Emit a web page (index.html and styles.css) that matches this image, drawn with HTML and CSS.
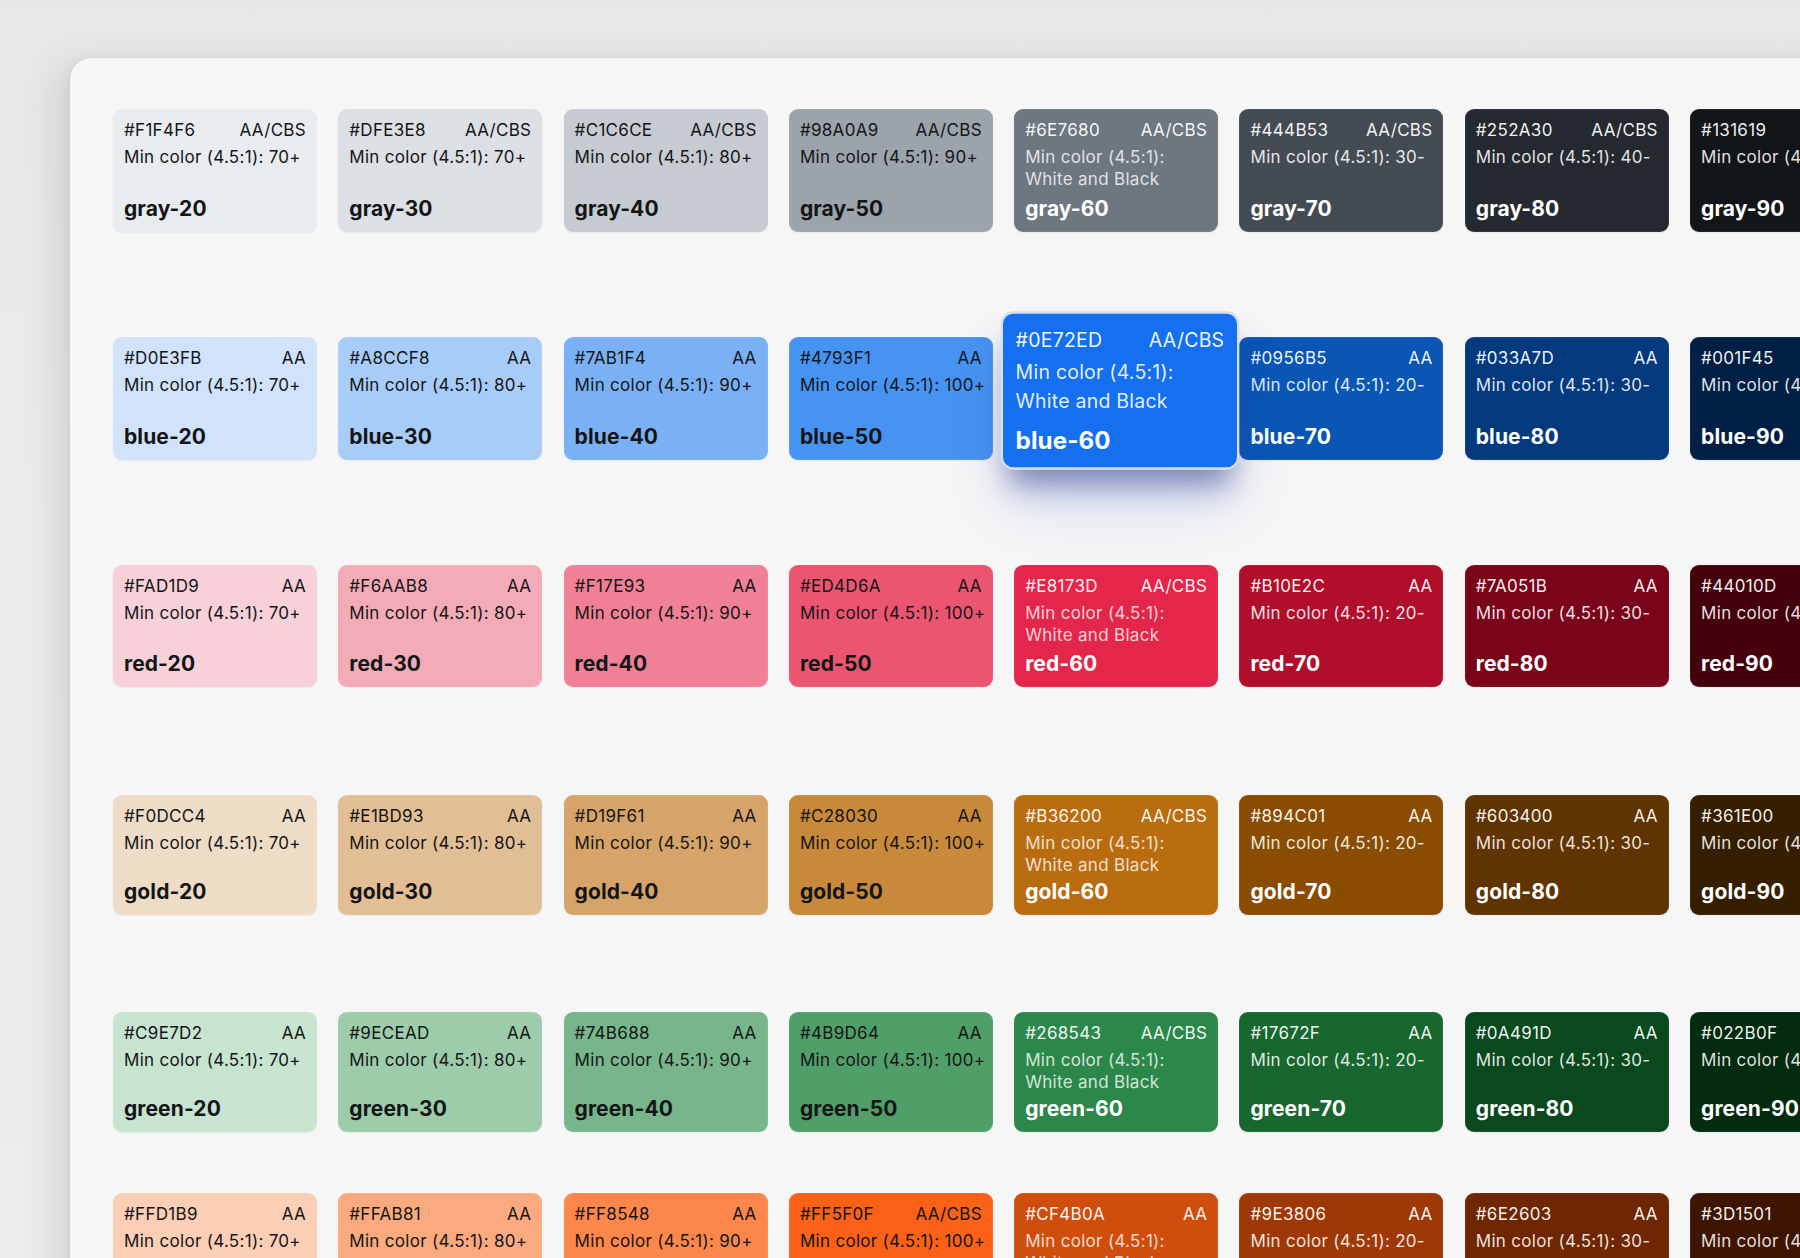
FILE: index.html
```html
<!DOCTYPE html>
<html lang="en">
<head>
<meta charset="utf-8">
<title>Color tokens</title>
<link rel="stylesheet" href="styles.css">
</head>
<body>
<main class="stage">
  <section class="panel">
    <div class="row row-gray">
      <div class="card light" style="--c:#E9ECEF"><div class="top"><span>#F1F4F6</span><span>AA/CBS</span></div><div class="min">Min color (4.5:1): 70+</div><div class="name">gray-20</div></div>
      <div class="card light" style="--c:#DCDFE4"><div class="top"><span>#DFE3E8</span><span>AA/CBS</span></div><div class="min">Min color (4.5:1): 70+</div><div class="name">gray-30</div></div>
      <div class="card light" style="--c:#C6CAD1"><div class="top"><span>#C1C6CE</span><span>AA/CBS</span></div><div class="min">Min color (4.5:1): 80+</div><div class="name">gray-40</div></div>
      <div class="card light" style="--c:#9CA3AB"><div class="top"><span>#98A0A9</span><span>AA/CBS</span></div><div class="min">Min color (4.5:1): 90+</div><div class="name">gray-50</div></div>
      <div class="card dark mid" style="--c:#6E7680"><div class="top"><span>#6E7680</span><span>AA/CBS</span></div><div class="min">Min color (4.5:1):<br>White and Black</div><div class="name">gray-60</div></div>
      <div class="card dark" style="--c:#444B53"><div class="top"><span>#444B53</span><span>AA/CBS</span></div><div class="min">Min color (4.5:1): 30-</div><div class="name">gray-70</div></div>
      <div class="card dark" style="--c:#252A30"><div class="top"><span>#252A30</span><span>AA/CBS</span></div><div class="min">Min color (4.5:1): 40-</div><div class="name">gray-80</div></div>
      <div class="card dark" style="--c:#131619"><div class="top"><span>#131619</span><span>AA/CBS</span></div><div class="min">Min color (4.5:1): 50-</div><div class="name">gray-90</div></div>
    </div>

    <div class="row row-blue">
      <div class="card light" style="--c:#D0E3FB"><div class="top"><span>#D0E3FB</span><span>AA</span></div><div class="min">Min color (4.5:1): 70+</div><div class="name">blue-20</div></div>
      <div class="card light" style="--c:#A8CCF8"><div class="top"><span>#A8CCF8</span><span>AA</span></div><div class="min">Min color (4.5:1): 80+</div><div class="name">blue-30</div></div>
      <div class="card light" style="--c:#7AB1F4"><div class="top"><span>#7AB1F4</span><span>AA</span></div><div class="min">Min color (4.5:1): 90+</div><div class="name">blue-40</div></div>
      <div class="card light" style="--c:#4793F1"><div class="top"><span>#4793F1</span><span>AA</span></div><div class="min">Min color (4.5:1): 100+</div><div class="name">blue-50</div></div>
      <div class="card dark focus" style="--c:#1570F0"><div class="top"><span>#0E72ED</span><span>AA/CBS</span></div><div class="min">Min color (4.5:1):<br>White and Black</div><div class="name">blue-60</div></div>
      <div class="card dark" style="--c:#0956B5"><div class="top"><span>#0956B5</span><span>AA</span></div><div class="min">Min color (4.5:1): 20-</div><div class="name">blue-70</div></div>
      <div class="card dark" style="--c:#033A7D"><div class="top"><span>#033A7D</span><span>AA</span></div><div class="min">Min color (4.5:1): 30-</div><div class="name">blue-80</div></div>
      <div class="card dark" style="--c:#001F45"><div class="top"><span>#001F45</span><span>AA</span></div><div class="min">Min color (4.5:1): 40-</div><div class="name">blue-90</div></div>
    </div>

    <div class="row row-red">
      <div class="card light" style="--c:#F7D0D8"><div class="top"><span>#FAD1D9</span><span>AA</span></div><div class="min">Min color (4.5:1): 70+</div><div class="name">red-20</div></div>
      <div class="card light" style="--c:#F4ABB8"><div class="top"><span>#F6AAB8</span><span>AA</span></div><div class="min">Min color (4.5:1): 80+</div><div class="name">red-30</div></div>
      <div class="card light" style="--c:#F08095"><div class="top"><span>#F17E93</span><span>AA</span></div><div class="min">Min color (4.5:1): 90+</div><div class="name">red-40</div></div>
      <div class="card light" style="--c:#EC5570"><div class="top"><span>#ED4D6A</span><span>AA</span></div><div class="min">Min color (4.5:1): 100+</div><div class="name">red-50</div></div>
      <div class="card dark mid" style="--c:#E3264A"><div class="top"><span>#E8173D</span><span>AA/CBS</span></div><div class="min">Min color (4.5:1):<br>White and Black</div><div class="name">red-60</div></div>
      <div class="card dark" style="--c:#B10E2C"><div class="top"><span>#B10E2C</span><span>AA</span></div><div class="min">Min color (4.5:1): 20-</div><div class="name">red-70</div></div>
      <div class="card dark" style="--c:#7A051B"><div class="top"><span>#7A051B</span><span>AA</span></div><div class="min">Min color (4.5:1): 30-</div><div class="name">red-80</div></div>
      <div class="card dark" style="--c:#44010D"><div class="top"><span>#44010D</span><span>AA</span></div><div class="min">Min color (4.5:1): 40-</div><div class="name">red-90</div></div>
    </div>

    <div class="row row-gold">
      <div class="card light" style="--c:#EEDCC6"><div class="top"><span>#F0DCC4</span><span>AA</span></div><div class="min">Min color (4.5:1): 70+</div><div class="name">gold-20</div></div>
      <div class="card light" style="--c:#E2BE95"><div class="top"><span>#E1BD93</span><span>AA</span></div><div class="min">Min color (4.5:1): 80+</div><div class="name">gold-30</div></div>
      <div class="card light" style="--c:#D6A468"><div class="top"><span>#D19F61</span><span>AA</span></div><div class="min">Min color (4.5:1): 90+</div><div class="name">gold-40</div></div>
      <div class="card light" style="--c:#C8893A"><div class="top"><span>#C28030</span><span>AA</span></div><div class="min">Min color (4.5:1): 100+</div><div class="name">gold-50</div></div>
      <div class="card dark mid" style="--c:#BA6D10"><div class="top"><span>#B36200</span><span>AA/CBS</span></div><div class="min">Min color (4.5:1):<br>White and Black</div><div class="name">gold-60</div></div>
      <div class="card dark" style="--c:#894C01"><div class="top"><span>#894C01</span><span>AA</span></div><div class="min">Min color (4.5:1): 20-</div><div class="name">gold-70</div></div>
      <div class="card dark" style="--c:#603400"><div class="top"><span>#603400</span><span>AA</span></div><div class="min">Min color (4.5:1): 30-</div><div class="name">gold-80</div></div>
      <div class="card dark" style="--c:#361E00"><div class="top"><span>#361E00</span><span>AA</span></div><div class="min">Min color (4.5:1): 40-</div><div class="name">gold-90</div></div>
    </div>

    <div class="row row-green">
      <div class="card light" style="--c:#C6E4CF"><div class="top"><span>#C9E7D2</span><span>AA</span></div><div class="min">Min color (4.5:1): 70+</div><div class="name">green-20</div></div>
      <div class="card light" style="--c:#9DCCAB"><div class="top"><span>#9ECEAD</span><span>AA</span></div><div class="min">Min color (4.5:1): 80+</div><div class="name">green-30</div></div>
      <div class="card light" style="--c:#77B68A"><div class="top"><span>#74B688</span><span>AA</span></div><div class="min">Min color (4.5:1): 90+</div><div class="name">green-40</div></div>
      <div class="card light" style="--c:#509F68"><div class="top"><span>#4B9D64</span><span>AA</span></div><div class="min">Min color (4.5:1): 100+</div><div class="name">green-50</div></div>
      <div class="card dark mid" style="--c:#2C874A"><div class="top"><span>#268543</span><span>AA/CBS</span></div><div class="min">Min color (4.5:1):<br>White and Black</div><div class="name">green-60</div></div>
      <div class="card dark" style="--c:#17672F"><div class="top"><span>#17672F</span><span>AA</span></div><div class="min">Min color (4.5:1): 20-</div><div class="name">green-70</div></div>
      <div class="card dark" style="--c:#0A491D"><div class="top"><span>#0A491D</span><span>AA</span></div><div class="min">Min color (4.5:1): 30-</div><div class="name">green-80</div></div>
      <div class="card dark" style="--c:#022B0F"><div class="top"><span>#022B0F</span><span>AA</span></div><div class="min">Min color (4.5:1): 40-</div><div class="name">green-90</div></div>
    </div>

    <div class="row row-orange">
      <div class="card light" style="--c:#FBCFB6"><div class="top"><span>#FFD1B9</span><span>AA</span></div><div class="min">Min color (4.5:1): 70+</div><div class="name">orange-20</div></div>
      <div class="card light" style="--c:#FBAA80"><div class="top"><span>#FFAB81</span><span>AA</span></div><div class="min">Min color (4.5:1): 80+</div><div class="name">orange-30</div></div>
      <div class="card light" style="--c:#FC874C"><div class="top"><span>#FF8548</span><span>AA</span></div><div class="min">Min color (4.5:1): 90+</div><div class="name">orange-40</div></div>
      <div class="card light" style="--c:#FB6217"><div class="top"><span>#FF5F0F</span><span>AA/CBS</span></div><div class="min">Min color (4.5:1): 100+</div><div class="name">orange-50</div></div>
      <div class="card dark mid" style="--c:#CF4E0E"><div class="top"><span>#CF4B0A</span><span>AA</span></div><div class="min">Min color (4.5:1):<br>White and Black</div><div class="name">orange-60</div></div>
      <div class="card dark" style="--c:#9E3806"><div class="top"><span>#9E3806</span><span>AA</span></div><div class="min">Min color (4.5:1): 20-</div><div class="name">orange-70</div></div>
      <div class="card dark" style="--c:#6E2603"><div class="top"><span>#6E2603</span><span>AA</span></div><div class="min">Min color (4.5:1): 30-</div><div class="name">orange-80</div></div>
      <div class="card dark" style="--c:#3D1501"><div class="top"><span>#3D1501</span><span>AA</span></div><div class="min">Min color (4.5:1): 40-</div><div class="name">orange-90</div></div>
    </div>
  </section>
</main>
</body>
</html>
```

FILE: styles.css
```css
* { box-sizing: border-box; }

html, body {
  margin: 0;
  padding: 0;
  height: 100%;
}

body {
  width: 1800px;
  height: 1258px;
  overflow: hidden;
  background: linear-gradient(180deg, #e7e7e9 0%, #ebebed 40%, #ececee 100%);
  font-family: Inter, "Noto Sans", "Liberation Sans", sans-serif;
  -webkit-font-smoothing: antialiased;
}

.stage {
  padding: 58px 0 0 70px;
}

.panel {
  width: 1900px;
  height: 1400px;
  background: #f6f6f7;
  border-radius: 22px 0 0 0;
  padding: 51px 0 0 43px;
  box-shadow: -16px 6px 36px rgba(0, 0, 0, 0.09), -3px 0 8px rgba(0, 0, 0, 0.04);
}

.row {
  display: grid;
  grid-template-columns: repeat(8, 204px);
  column-gap: 21.3px;
}

.row-gray  { height: 123px; }
.row-blue  { height: 123px; margin-top: 105px; }
.row-red   { height: 122px; margin-top: 105px; }
.row-gold  { height: 120px; margin-top: 108px; }
.row-green { height: 120px; margin-top: 97px; }
.row-orange{ height: 120px; margin-top: 61px; }

.card {
  background: var(--c);
  border-radius: 9px;
  padding: 8px 11px 10px 11px;
  display: flex;
  flex-direction: column;
  font-size: 17px;
  line-height: 26.5px;
  letter-spacing: 0.3px;
  box-shadow: 0 1px 2px rgba(0, 0, 0, 0.06), inset 0 0 0 1px rgba(255, 255, 255, 0.06);
  position: relative;
}

.card.light { color: #141517; }
.card.dark { color: #ffffff; }
.card.dark .top { color: rgba(255, 255, 255, 0.95); }
.card.dark .min { color: rgba(255, 255, 255, 0.88); }
.card.mid .min { color: rgba(255, 255, 255, 0.8); line-height: 22.5px; padding-top: 2px; }

.top {
  display: flex;
  justify-content: space-between;
  white-space: nowrap;
}

.min {
  white-space: nowrap;
}

.name {
  margin-top: auto;
  font-size: 21px;
  line-height: 26px;
  font-weight: 700;
  letter-spacing: 0.1px;
}

.card.focus {
  height: 134px;
  margin: -5.5px 0;
  padding-top: 10px;
  letter-spacing: 0.2px;
  transform: translate(4px, -8.5px) scale(1.147);
  z-index: 3;
  box-shadow:
    0 0 0 2px #d9dfec,
    0 20px 24px -6px rgba(35, 55, 130, 0.5),
    0 34px 50px -4px rgba(60, 90, 200, 0.22);
}

.card.focus .min {
  line-height: 25px;
  color: rgba(255, 255, 255, 0.9);
  padding-top: 2px;
}
```
